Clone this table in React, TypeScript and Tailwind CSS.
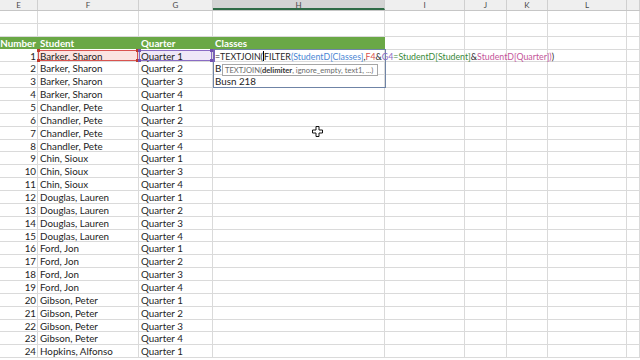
import React from "react";

const rows: [number, string, string][] = [
  [1, "Barker, Sharon", "Quarter 1"],
  [2, "Barker, Sharon", "Quarter 2"],
  [3, "Barker, Sharon", "Quarter 3"],
  [4, "Barker, Sharon", "Quarter 4"],
  [5, "Chandler, Pete", "Quarter 1"],
  [6, "Chandler, Pete", "Quarter 2"],
  [7, "Chandler, Pete", "Quarter 3"],
  [8, "Chandler, Pete", "Quarter 4"],
  [9, "Chin, Sioux", "Quarter 1"],
  [10, "Chin, Sioux", "Quarter 3"],
  [11, "Chin, Sioux", "Quarter 4"],
  [12, "Douglas, Lauren", "Quarter 1"],
  [13, "Douglas, Lauren", "Quarter 2"],
  [14, "Douglas, Lauren", "Quarter 3"],
  [15, "Douglas, Lauren", "Quarter 4"],
  [16, "Ford, Jon", "Quarter 1"],
  [17, "Ford, Jon", "Quarter 2"],
  [18, "Ford, Jon", "Quarter 3"],
  [19, "Ford, Jon", "Quarter 4"],
  [20, "Gibson, Peter", "Quarter 1"],
  [21, "Gibson, Peter", "Quarter 2"],
  [22, "Gibson, Peter", "Quarter 3"],
  [23, "Gibson, Peter", "Quarter 4"],
  [24, "Hopkins, Alfonso", "Quarter 1"],
];

const cell = "h-full shrink-0 border-r border-b border-[#dadada] overflow-visible whitespace-nowrap";

function Row({ e, f, g, h }: { e?: React.ReactNode; f?: React.ReactNode; g?: React.ReactNode; h?: React.ReactNode }) {
  return (
    <div className="flex h-[12.87px] leading-[12.87px]">
      <div className={`${cell} w-[38px] text-right pr-[1px]`}>{e}</div>
      <div className={`${cell} w-[101px] pl-[2px]`}>{f}</div>
      <div className={`${cell} w-[74px] pl-[2px]`}>{g}</div>
      <div className={`${cell} w-[172px] pl-[2px]`}>{h}</div>
      <div className={`${cell} w-[80px]`} />
      <div className={`${cell} w-[42px]`} />
      <div className={`${cell} w-[41px]`} />
      <div className={`${cell} w-[79px]`} />
      <div className={`${cell} w-[13px]`} />
    </div>
  );
}

function Handle({ className }: { className: string }) {
  return <span className={`absolute h-[3px] w-[3px] ${className}`} />;
}

export default function App() {
  const head = "h-full shrink-0 border-r border-[#cfcfcf] text-center leading-[10px]";
  return (
    <div className="relative h-[360px] w-[640px] overflow-hidden bg-white font-['Lato','Liberation_Sans',sans-serif] text-[9.8px] text-[#1e1e1e]">
      {/* column letters */}
      <div className="flex h-[11px] border-b border-[#c6c6c6] bg-[#efefef] text-[8px] text-[#4a4a4a]">
        <div className={`${head} w-[38px]`}>E</div>
        <div className={`${head} w-[101px]`}>F</div>
        <div className={`${head} w-[74px]`}>G</div>
        <div className={`${head} w-[172px] border-b-2 border-b-[#2f6b46] bg-[#d4d4d4]`}>H</div>
        <div className={`${head} w-[80px]`}>I</div>
        <div className={`${head} w-[42px]`}>J</div>
        <div className={`${head} w-[41px]`}>K</div>
        <div className={`${head} w-[79px]`}>L</div>
        <div className={`${head} w-[13px]`} />
      </div>

      <Row />
      <Row />

      {/* table header */}
      <div className="flex h-[12.87px] leading-[12.87px]">
        <div className="flex h-full w-[385px] shrink-0 border-b border-white bg-[#6aa846] font-bold text-white">
          <div className="w-[38px] shrink-0 text-right pr-[2px]">Number</div>
          <div className="w-[101px] shrink-0 pl-[2px]">Student</div>
          <div className="w-[74px] shrink-0 pl-[2px]">Quarter</div>
          <div className="w-[172px] shrink-0 pl-[2px]">Classes</div>
        </div>
        <div className={`${cell} w-[80px]`} />
        <div className={`${cell} w-[42px]`} />
        <div className={`${cell} w-[41px]`} />
        <div className={`${cell} w-[79px]`} />
        <div className={`${cell} w-[13px]`} />
      </div>

      {rows.map(([n, s, q]) => (
        <Row
          key={n}
          e={n}
          f={
            n === 1 ? (
              <span className="relative -ml-[2px] block h-full bg-[#fbe4e1] pl-[2px]">
                {s}
                <span className="absolute inset-[0px] border border-[#d9534f]" />
                <Handle className="-left-[1px] -top-[1px] bg-[#c0392b]" />
                <Handle className="-right-[1px] -top-[1px] bg-[#c0392b]" />
                <Handle className="-left-[1px] -bottom-[1px] bg-[#c0392b]" />
                <Handle className="-right-[1px] -bottom-[1px] bg-[#c0392b]" />
              </span>
            ) : (
              s
            )
          }
          g={
            n === 1 ? (
              <span className="relative -ml-[2px] block h-full bg-[#efe8f8] pl-[2px]">
                {q}
                <span className="absolute inset-[0px] border border-[#8a6cc4]" />
                <Handle className="-left-[1px] -top-[1px] bg-[#7250b0]" />
                <Handle className="-right-[1px] -top-[1px] bg-[#7250b0]" />
                <Handle className="-left-[1px] -bottom-[1px] bg-[#7250b0]" />
                <Handle className="-right-[1px] -bottom-[1px] bg-[#7250b0]" />
              </span>
            ) : (
              q
            )
          }
          h={n === 2 ? "B" : n === 3 ? "Busn 218" : undefined}
        />
      ))}

      {/* in-cell editor frame */}
      <div className="pointer-events-none absolute left-[213px] top-[49px] h-[39px] w-[173px] border border-[#6f84a6]" />
      <div className="absolute left-[213px] top-[49px] h-[13px] w-[2px] bg-[#7a63b8]" />

      {/* formula being typed */}
      <div className="absolute left-[215px] top-[49.6px] h-[12.87px] whitespace-nowrap text-[8.8px] leading-[12.87px]">
        <span>=TEXTJOIN(</span>
        <span className="inline-block h-[10px] w-px translate-y-[1px] bg-black" />
        <span>FILTER</span>
        <span className="text-[#4a86d4]">(StudentD[Classes]</span>
        <span>,</span>
        <span className="text-[#d9534f]">F4</span>
        <span>&amp;</span>
        <span className="text-[#8a6cc4]">G4</span>
        <span className="text-[#3a8a3a]">=StudentD[Student]</span>
        <span>&amp;</span>
        <span className="text-[#c4559a]">StudentD[Quarter])</span>
        <span>)</span>
      </div>

      {/* function tooltip */}
      <div className="absolute left-[222px] top-[64px] h-[12px] w-[156px] whitespace-nowrap border border-[#a6a6a6] bg-white pl-[2px] text-[7.6px] leading-[10px] text-[#6b6b6b]">
        TEXTJOIN(<span className="font-bold text-[#333]">delimiter</span>, ignore_empty, text1, ...)
      </div>

      {/* mouse cursor */}
      <svg className="absolute left-[312px] top-[126px]" width="11" height="11" viewBox="0 0 11 11">
        <path d="M4 0.5h3v3.5h3.5v3H7v3.5H4V7H0.5V4H4z" fill="#fff" stroke="#111" strokeWidth="1" />
      </svg>
    </div>
  );
}
